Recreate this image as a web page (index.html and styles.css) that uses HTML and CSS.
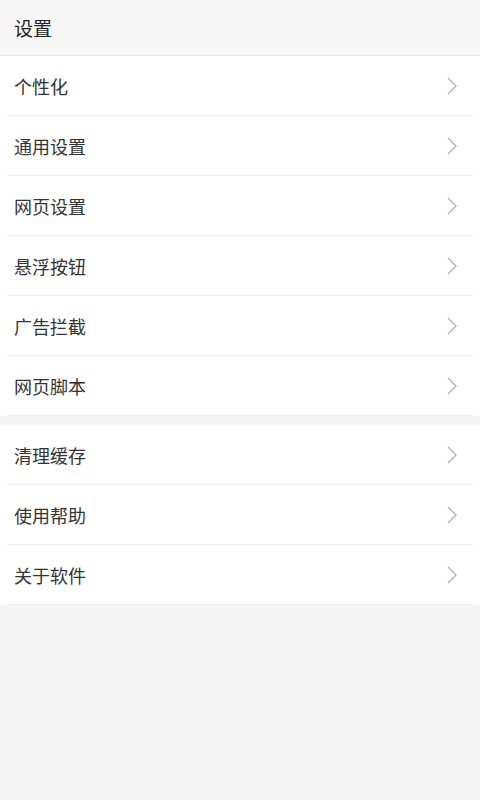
FILE: index.html
```html
<!DOCTYPE html>
<html lang="zh">
<head>
<meta charset="utf-8">
<title>设置</title>
<link rel="stylesheet" href="styles.css">
</head>
<body>
<header class="topbar"><h1 class="title">设置</h1></header>
<main class="page">
  <section class="group">
    <div class="row"><span class="label">个性化</span><svg class="chev" viewBox="0 0 10 18"><path d="M1 1 L9 9 L1 17"/></svg></div>
    <div class="row"><span class="label">通用设置</span><svg class="chev" viewBox="0 0 10 18"><path d="M1 1 L9 9 L1 17"/></svg></div>
    <div class="row"><span class="label">网页设置</span><svg class="chev" viewBox="0 0 10 18"><path d="M1 1 L9 9 L1 17"/></svg></div>
    <div class="row"><span class="label">悬浮按钮</span><svg class="chev" viewBox="0 0 10 18"><path d="M1 1 L9 9 L1 17"/></svg></div>
    <div class="row"><span class="label">广告拦截</span><svg class="chev" viewBox="0 0 10 18"><path d="M1 1 L9 9 L1 17"/></svg></div>
    <div class="row"><span class="label">网页脚本</span><svg class="chev" viewBox="0 0 10 18"><path d="M1 1 L9 9 L1 17"/></svg></div>
  </section>
  <section class="group">
    <div class="row"><span class="label">清理缓存</span><svg class="chev" viewBox="0 0 10 18"><path d="M1 1 L9 9 L1 17"/></svg></div>
    <div class="row"><span class="label">使用帮助</span><svg class="chev" viewBox="0 0 10 18"><path d="M1 1 L9 9 L1 17"/></svg></div>
    <div class="row"><span class="label">关于软件</span><svg class="chev" viewBox="0 0 10 18"><path d="M1 1 L9 9 L1 17"/></svg></div>
  </section>
</main>
</body>
</html>
```
FILE: styles.css
```css
html, body {
  margin: 0;
  padding: 0;
  background: #f4f5f4;
  font-family: "Noto Sans CJK SC", "Noto Sans", sans-serif;
}
.topbar {
  height: 55px;
  background: #f7f7f7;
  border-bottom: 1px solid #e6e6e6;
  display: flex;
  align-items: center;
  padding-left: 14px;
}
.title {
  margin: 0;
  font-size: 19px;
  font-weight: 400;
  color: #222;
}
.page {
  display: flex;
  flex-direction: column;
  gap: 9px;
}
.group {
  background: #fff;
}
.row {
  height: 60px;
  display: flex;
  align-items: center;
  justify-content: space-between;
  padding: 0 23px 0 14px;
  position: relative;
}
.row::after {
  content: "";
  position: absolute;
  left: 7px;
  right: 7px;
  bottom: 0;
  height: 1px;
  background: #efefef;
}
.label {
  font-size: 18px;
  color: #333;
}
.chev {
  width: 10px;
  height: 18px;
  fill: none;
  stroke: #b3b3b3;
  stroke-width: 1.4;
}
```
